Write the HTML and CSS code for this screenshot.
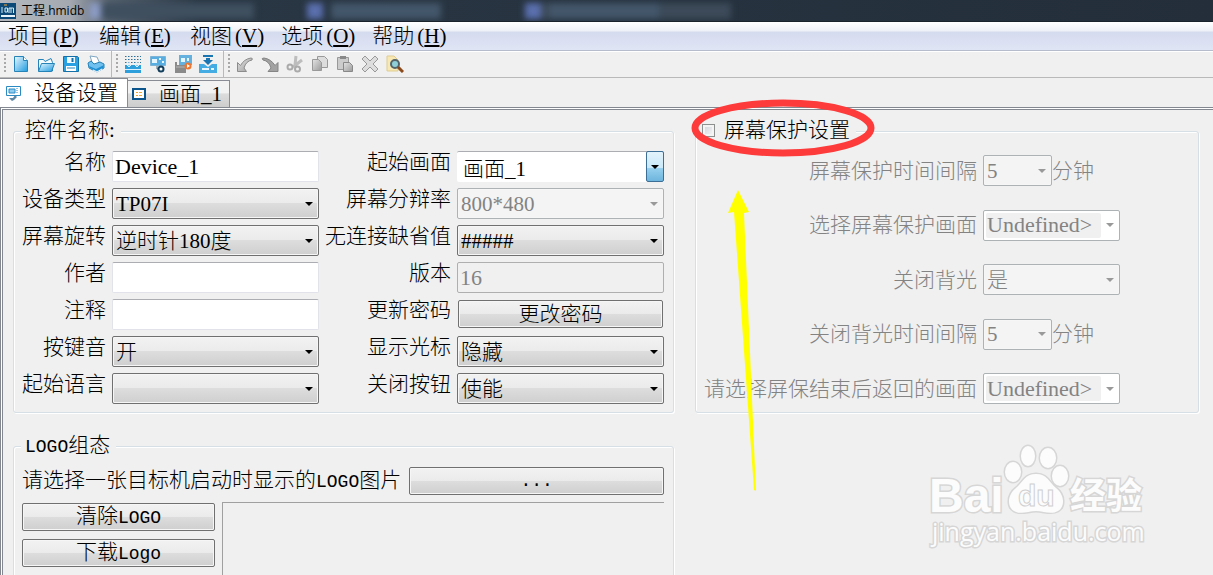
FILE: index.html
```html
<!DOCTYPE html>
<html lang="zh-CN">
<head>
    <meta charset="UTF-8">
    <meta name="viewport" content="width=device-width, initial-scale=1.0">
    <title>工程.hmidb</title>
    <link rel="stylesheet" href="styles.css">
</head>
<body>

<!-- Title bar -->
<header class="titlebar">
    <svg class="app-icon" width="16" height="16" viewBox="0 0 16 16">
        <rect width="16" height="16" fill="#0b4a78"/>
        <rect x="1" y="12" width="14" height="2" fill="#e8f4fb"/>
        <path d="M2 4v6M5 5h2.500v4H5zM9 10V5h2v5M11 5h2.500v5" fill="none" stroke="#d5ecf8"/>
        <path d="M4 2h3" stroke="#f0a030"/>
    </svg>
    <span class="title">工程.hmidb</span>
    <div class="glass">
        <span class="glass-tab tab-a"></span>
        <span class="glass-tab tab-b"></span>
        <span class="glass-tab tab-c"></span>
    </div>
</header>

<!-- Menu -->
<nav class="menubar">
    <button type="button">项目<span class="latin">(<u>P</u>)</span></button>
    <button type="button">编辑<span class="latin">(<u>E</u>)</span></button>
    <button type="button">视图<span class="latin">(<u>V</u>)</span></button>
    <button type="button">选项<span class="latin">(<u>O</u>)</span></button>
    <button type="button">帮助<span class="latin">(<u>H</u>)</span></button>
</nav>

<svg class="defs" width="0" height="0">
    <defs>
        <linearGradient id="blue" x1="0" y1="0" x2="1" y2="1">
            <stop offset="0" stop-color="#eaf8ff"/>
            <stop offset="1" stop-color="#1e9be0"/>
        </linearGradient>
        <linearGradient id="gray" x1="0" y1="0" x2="1" y2="1">
            <stop offset="0" stop-color="#e4e4e4"/>
            <stop offset="1" stop-color="#9a9a9a"/>
        </linearGradient>
    </defs>
</svg>

<!-- Toolbar -->
<div class="toolbar">
    <div class="tool-group">
        <button type="button" aria-label="新建">
            <svg width="18" height="18" viewBox="0 0 18 18"><path d="M2.500 1.500h9l4 4v11h-13z" fill="url(#blue)" stroke="#2583b8"/><path d="M11.500 1.500v4h4" fill="#fff" stroke="#2583b8"/></svg>
        </button>
        <button type="button" aria-label="打开">
            <svg width="18" height="18" viewBox="0 0 18 18"><path d="M1.500 16V4.500h5l1.500 2 6-3 1.500 4V16z" fill="#f3fbff" stroke="#2583b8"/><path d="M1.500 16.500l3-8h13l-3 8z" fill="url(#blue)" stroke="#2583b8"/></svg>
        </button>
        <button type="button" aria-label="保存">
            <svg width="18" height="18" viewBox="0 0 18 18"><path d="M1.500 1.500h14l1 1v14h-15z" fill="#29a0e2" stroke="#1670a8"/><path d="M5 2h8v6H5z" fill="#eefaff"/><path d="M9.500 3h2v4h-2z" fill="#1670a8"/><path d="M4 11h10v5H4z" fill="#fff"/><path d="M5 13h8" stroke="#2583b8"/></svg>
        </button>
        <button type="button" aria-label="打印">
            <svg width="18" height="18" viewBox="0 0 18 18"><path d="M3 1l7 1 3 7-7 1z" fill="#fff" stroke="#7fa8c4"/><path d="M1 8l3-2 3 3 6-2 4 2v4l-7 4-8-4z" fill="#6fc0ee" stroke="#2583b8"/><path d="M2 11l7 3 8-4-1 3-6 3-7-3z" fill="#1e8fd2"/><path d="M6 15l4 2 5-3" fill="none" stroke="#fff"/></svg>
        </button>
    </div>
    <div class="tool-group">
        <button type="button" aria-label="编译">
            <svg width="18" height="18" viewBox="0 0 18 18"><path d="M1 1.500h16M1 4.500h16M1 7.500h16" stroke="#2d6f9c" stroke-dasharray="1.500 1.500"/><path d="M1 10h16v8H1z" fill="#2f9fdc"/><path d="M5 7v5M3 10l2 2 2-2M13 7v5M11 10l2 2 2-2M1 14.500h16" fill="none" stroke="#d9f1ff"/></svg>
        </button>
        <button type="button" aria-label="在线模拟">
            <svg width="18" height="18" viewBox="0 0 18 18"><path d="M1.500 1.500h15v9h-15z" fill="#58aee0" stroke="#7db4d6"/><path d="M3 4h5v4H3zM10 3h2v2h-2zM13 6h2v2h-2z" fill="#e6f6ff"/><path d="M8 11v3h2" fill="none" stroke="#5a6d7a"/><circle cx="12" cy="14" r="2.500" fill="#fff" stroke="#123e5b" stroke-width="2"/></svg>
        </button>
        <button type="button" aria-label="离线模拟">
            <svg width="18" height="18" viewBox="0 0 18 18"><path d="M5 0h13v10H5z" fill="#64b1df"/><path d="M7 3h4v4H7zM13 3h2v3h-2z" fill="#e6f6ff"/><path d="M1 7h2v3h9v8H1z" fill="#8a8a8a"/><path d="M2 12h9" stroke="#b5b5b5"/><circle cx="14" cy="11" r="3.500" fill="#ee7630"/><path d="M13 9l3 2-3 2z" fill="#fff"/></svg>
        </button>
        <button type="button" aria-label="下载">
            <svg width="18" height="18" viewBox="0 0 18 18"><path d="M4 0h10v2H4zM7 3h4v2h3L9 10 4 5h3z" fill="#1b75b0"/><path d="M0 9h5l4 3 4-3h5v9H0z" fill="#45abe3"/><path d="M3 14h7M12 14h3" stroke="#e8f7ff" stroke-width="2"/></svg>
        </button>
    </div>
    <div class="tool-group">
        <button type="button" aria-label="撤销">
            <svg width="18" height="18" viewBox="0 0 18 18"><path d="M1.500 16.500v-9l3 3Q8 4 15 3q2 0 1 2-6 1-8 8l2.500 3.500z" fill="url(#gray)" stroke="#8c8c8c"/></svg>
        </button>
        <button type="button" aria-label="重做">
            <svg width="18" height="18" viewBox="0 0 18 18"><path d="M17 16.500v-9l-3 3Q10 4 3 3 0 3 2 5q6 1 8 8l-3 3.500z" fill="#a2a2a2" stroke="#858585"/></svg>
        </button>
        <button type="button" aria-label="剪切">
            <svg width="18" height="18" viewBox="0 0 18 18"><path d="M10 1l-1 9M16 5l-9 7" stroke="#bdbdbd" stroke-width="3"/><circle cx="4" cy="12" r="2.500" fill="none" stroke="#aaa" stroke-width="2"/><circle cx="11.500" cy="14" r="2.500" fill="none" stroke="#aaa" stroke-width="2"/></svg>
        </button>
        <button type="button" aria-label="复制">
            <svg width="18" height="18" viewBox="0 0 18 18"><path d="M6.500 1.500h7l3 3v8h-10z" fill="#ddd" stroke="#999"/><path d="M1.500 4.500h6l3 3v8h-9z" fill="url(#gray)" stroke="#999"/></svg>
        </button>
        <button type="button" aria-label="粘贴">
            <svg width="18" height="18" viewBox="0 0 18 18"><path d="M1.500 2.500h11v12h-11z" fill="#ccc" stroke="#999"/><path d="M4 1h6v3H4z" fill="#888"/><path d="M7.500 7.500h6l3 3v6h-9z" fill="url(#gray)" stroke="#888"/></svg>
        </button>
        <button type="button" aria-label="删除">
            <svg width="18" height="18" viewBox="0 0 18 18"><path d="M4 1l5 5 5-5 3 3-5 5 5 5-3 3-5-5-5 5-3-3 5-5-5-5z" fill="#ddd" stroke="#999"/></svg>
        </button>
        <button type="button" aria-label="查找">
            <svg width="18" height="18" viewBox="0 0 18 18"><path d="M1 1h7l4 4v11H1z" fill="#f8e8b4" stroke="#dfcb90"/><circle cx="9" cy="9" r="4" fill="#8fd0d8" stroke="#54646c" stroke-width="2"/><path d="M12 12l5 5" stroke="#8a4a1c" stroke-width="3"/></svg>
        </button>
    </div>
</div>

<!-- Tabs -->
<div class="tabs" role="tablist">
    <button type="button" role="tab" class="tab active" aria-selected="true">
        <svg width="17" height="17" viewBox="0 0 17 17"><path d="M1.500 1.500h14v9h-14z" fill="#fff" stroke="#2a8ac4"/><path d="M4 4h6v4H4z" fill="#8fcdf0" stroke="#2a8ac4"/><path d="M12 3v5" stroke="#2a8ac4" stroke-dasharray="1 1"/><path d="M4 13h4l2-3 2 2-3 3-2 1z" fill="#5d87a5"/></svg>
        <span>设备设置</span>
    </button>
    <button type="button" role="tab" class="tab" aria-selected="false">
        <svg width="14" height="12" viewBox="0 0 14 12"><path d="M1 1h12v10H1z" fill="#fff" stroke="#0b548c" stroke-width="2"/><path d="M4 4h2v1H4zM7 4h3v1H7zM4 7h2v1H4zM7 7h3v1H7z" fill="#efa62c"/></svg>
        <span>画面<span class="latin">_1</span></span>
    </button>
</div>

<main class="pane">
    <fieldset class="group device">
        <legend>控件名称<span class="latin">:</span></legend>
        <div class="device-grid">
            <label for="name">名称</label>
            <input type="text" id="name" value="Device_1">
            <label for="startScreen">起始画面</label>
            <div class="combo hot">
                <input type="text" id="startScreen" value="画面_1">
                <button type="button" aria-label="展开"></button>
            </div>

            <label for="deviceType">设备类型</label>
            <select id="deviceType"><option>TP07I</option></select>
            <label for="resolution">屏幕分辩率</label>
            <select id="resolution" disabled><option>800*480</option></select>

            <label for="rotate">屏幕旋转</label>
            <select id="rotate"><option>逆时针180度</option></select>
            <label for="offline">无连接缺省值</label>
            <select id="offline"><option>#####</option></select>

            <label for="author">作者</label>
            <input type="text" id="author">
            <label for="version">版本</label>
            <input type="text" id="version" value="16" disabled>

            <label for="comment">注释</label>
            <input type="text" id="comment">
            <label for="password">更新密码</label>
            <button type="button" id="password" class="push">更改密码</button>

            <label for="keySound">按键音</label>
            <select id="keySound"><option>开</option></select>
            <label for="cursor">显示光标</label>
            <select id="cursor"><option>隐藏</option></select>

            <label for="language">起始语言</label>
            <select id="language"><option></option></select>
            <label for="closeButton">关闭按钮</label>
            <select id="closeButton"><option>使能</option></select>
        </div>
    </fieldset>

    <fieldset class="group saver" disabled>
        <legend><label class="saver-title"><input type="checkbox" id="saverOn">屏幕保护设置</label></legend>
        <div class="saver-grid">
            <label for="saverTime">屏幕保护时间间隔</label>
            <div class="field"><select id="saverTime" class="short"><option>5</option></select><span>分钟</span></div>

            <label for="saverScreen">选择屏幕保护画面</label>
            <div class="combo">
                <input type="text" id="saverScreen" value="Undefined&gt;">
                <button type="button" aria-label="展开"></button>
            </div>

            <label for="backlight">关闭背光</label>
            <div class="field"><select id="backlight"><option>是</option></select></div>

            <label for="backlightTime">关闭背光时间间隔</label>
            <div class="field"><select id="backlightTime" class="short"><option>5</option></select><span>分钟</span></div>

            <label for="returnScreen">请选择屏保结束后返回的画面</label>
            <div class="combo">
                <input type="text" id="returnScreen" value="Undefined&gt;">
                <button type="button" aria-label="展开"></button>
            </div>
        </div>
    </fieldset>

    <fieldset class="group logo">
        <legend><span class="mono">LOGO</span>组态</legend>
        <div class="logo-pick">
            <label for="browse">请选择一张目标机启动时显示的<span class="mono">LOGO</span>图片</label>
            <button type="button" id="browse" class="push mono">...</button>
        </div>
        <div class="logo-body">
            <div class="logo-actions">
                <button type="button" class="push">清除<span class="mono">LOGO</span></button>
                <button type="button" class="push">下载<span class="mono">Logo</span></button>
                <input type="text" class="logo-size" aria-label="LOGO" disabled>
            </div>
            <div class="preview"></div>
        </div>
    </fieldset>
</main>

<!-- Marks drawn over the window -->
<svg class="marks" width="200" height="400" viewBox="0 0 200 400">
    <ellipse cx="98" cy="33" rx="88" ry="25" fill="none" stroke="#fc3b3a" stroke-width="7"/>
    <path d="M53 95l11 22-5 1 12 278-2-1-20-278-6 1z" fill="#ffff00"/>
</svg>

<svg class="watermark" width="224" height="110" viewBox="0 0 224 110">
    <g fill="#fcfcfc" stroke="#d6d6d6" stroke-width="3" paint-order="stroke">
        <text class="wm-latin" x="1" y="72">Bai</text>
        <ellipse cx="85" cy="32" rx="8" ry="10"/>
        <ellipse cx="100" cy="16" rx="7" ry="10"/>
        <ellipse cx="120" cy="18" rx="8" ry="10"/>
        <ellipse cx="132" cy="36" rx="8" ry="10"/>
        <path d="M108 34C97 34 95 42 88 48C79 55 79 67 86 71C93 75 100 71 108 71C116 71 123 75 130 71C137 67 137 55 128 48C121 42 119 34 108 34Z"/>
        <text class="wm-cjk" x="142" y="69">经验</text>
        <text class="wm-url" x="4" y="101">jingyan.baidu.com</text>
    </g>
    <text class="wm-du" x="90" y="66">du</text>
</svg>

</body>
</html>
```
FILE: styles.css
```css
* {
    box-sizing: border-box;
}

body {
    margin: 0;
    height: 100vh;
    overflow: hidden;
    display: flex;
    flex-direction: column;
    position: relative;
    background-color: #f0f0f0;
    color: #000;
    font-family: "Liberation Serif", "Noto Sans CJK SC", serif;
    font-weight: 300;
    font-size: 21px;
    line-height: 22px;
}

button, input, select {
    font: inherit;
    color: inherit;
    margin: 0;
    border-radius: 2px;
}

.mono {
    font-family: "Liberation Mono", "Noto Sans CJK SC", monospace;
    font-size: 18px;
}

.defs {
    position: absolute;
}

/* Title bar */
.titlebar {
    flex: none;
    display: flex;
    align-items: center;
    gap: 5px;
    height: 22px;
    border-bottom: 1px solid #1a222c;
    background: linear-gradient(90deg, #b4b8be 0, #a4a9b1 70px, #55606d 110px, #293643 200px, #232e3a 100%);
    font-family: "Open Sans", "Noto Sans CJK SC", sans-serif;
    font-size: 12px;
    font-weight: 400;
    overflow: hidden;
}

.glass {
    display: flex;
    gap: 12px;
    filter: blur(3px);
}

.glass-tab {
    width: 206px;
    height: 16px;
    background: linear-gradient(90deg, #5a6fae 0 16px, transparent 16px 24px, #43566a 24px 65%, transparent 65%);
}

.tab-a {
    background: linear-gradient(90deg, #8c9cc4 0 12px, #3f4f5f 12px 80%, transparent 80%);
}

.tab-c {
    background-color: #3c4a59;
}

/* Menu */
.menubar {
    flex: none;
    display: flex;
    gap: 17px;
    height: 29px;
    padding: 0 8px;
    border-bottom: 1px solid #b6bccc;
    box-shadow: 0 1px 0 #fff;
    background: linear-gradient(#fff 0, #eef1f8 9px, #d5dbee 10px, #e0e5f5 100%);
}

.menubar button {
    min-width: 74px;
    padding: 0;
    border: none;
    background: none;
    text-align: left;
    white-space: nowrap;
}

.menubar .latin {
    padding-left: 3px;
}

.menubar u {
    text-underline-offset: 2px;
}

/* Toolbar */
.toolbar {
    flex: none;
    display: flex;
    height: 27px;
    border-bottom: 1px solid #b9b9b9;
}

.tool-group {
    display: flex;
    align-items: center;
    padding: 0 3px 0 4px;
    border-right: 1px solid #b9b9b9;
}

.tool-group:last-child {
    border-right: none;
}

.tool-group::before {
    content: "";
    width: 2px;
    height: 20px;
    margin-right: 2px;
    background: repeating-linear-gradient(#a8a8a8 0 2px, transparent 2px 4px);
}

.tool-group button {
    display: flex;
    justify-content: center;
    width: 25px;
    padding: 0;
    border: none;
    background: none;
}

/* Tabs */
.tabs {
    flex: none;
    display: flex;
    align-items: flex-end;
    height: 29px;
}

.tab {
    display: flex;
    align-items: center;
    gap: 13px;
    height: 27px;
    padding: 0 7px 0 4px;
    border: 1px solid #898c95;
    border-width: 1px 1px 0 0;
    border-radius: 0;
    background: linear-gradient(#f2f2f2 0 45%, #dcdcdc 50%, #cdcdcd 100%);
}

.tab.active {
    height: 29px;
    padding: 0 9px 0 5px;
    gap: 12px;
    background: #fff;
}

/* Pane with the groups */
.pane {
    flex: 1;
    min-height: 0;
    display: grid;
    grid-template-columns: 661fr 504fr;
    grid-template-rows: auto auto;
    align-content: start;
    gap: 22px 21px;
    padding: 12px 14px 0 12px;
    border-top: 1px solid #828790;
    border-left: 1px solid #828790;
    box-shadow: inset 1px 1px 0 #fff, inset 2px 2px 0 #828790;
}

.group {
    min-width: 0;
    margin: 0;
    padding: 9px 9px 8px 8px;
    border: 1px solid #d5dfe5;
    border-radius: 3px;
    box-shadow: inset 1px 1px 0 #fff, 1px 1px 0 #fff;
}

legend {
    margin-left: -1px;
    padding: 0 6px 0 4px;
    height: 22px;
    background-color: #f0f0f0;
    line-height: 20px;
    white-space: nowrap;
}

.device-grid {
    display: grid;
    grid-template-columns: auto 1fr auto 1fr;
    grid-auto-rows: 31px;
    gap: 6px;
}

.device-grid label {
    text-align: right;
    white-space: nowrap;
}

/* Controls */
input[type="text"] {
    width: 100%;
    min-width: 0;
    height: 31px;
    padding: 0 2px;
    border: 1px solid #e2e3ea;
    border-top-color: #abadb3;
    background-color: #fff;
    font-size: 22px;
}

input[type="text"]:disabled {
    border-color: #afafaf;
    background-color: #f0f0f0;
    color: #838383;
}

select {
    appearance: none;
    width: 100%;
    height: 31px;
    padding: 0 20px 0 3px;
    border: 1px solid #707070;
    background: url("data:image/svg+xml,%3Csvg xmlns='http://www.w3.org/2000/svg' width='8' height='4'%3E%3Cpath d='M0 0h8L4 4z'/%3E%3C/svg%3E") no-repeat right 5px center, linear-gradient(#f2f2f2 0, #ebebeb 48%, #dddddd 50%, #cfcfcf 100%);
    box-shadow: inset 0 0 0 1px #f6f6f6;
}

select:disabled {
    border-color: #adb2b5;
    background: url("data:image/svg+xml,%3Csvg xmlns='http://www.w3.org/2000/svg' width='8' height='4'%3E%3Cpath d='M0 0h8L4 4z' fill='%23999'/%3E%3C/svg%3E") no-repeat right 5px center, #f4f4f4;
    color: #838383;
    opacity: 1;
}

.push {
    height: 28px;
    padding: 0 8px;
    border: 1px solid #707070;
    background: linear-gradient(#f2f2f2 0, #ebebeb 48%, #dddddd 50%, #cfcfcf 100%);
    box-shadow: inset 0 0 0 1px #f6f6f6;
    line-height: 24px;
}

.device-grid .push {
    margin: 1px;
}

.combo {
    display: flex;
    height: 31px;
    border: 1px solid #adb2b5;
    border-radius: 2px;
    background-color: #fff;
}

.combo input[type="text"] {
    flex: 1;
    height: 25px;
    margin: 2px 0 2px 2px;
    padding: 0 1px;
    border: none;
}

.combo button {
    width: 18px;
    padding: 0;
    border: none;
    background: url("data:image/svg+xml,%3Csvg xmlns='http://www.w3.org/2000/svg' width='8' height='4'%3E%3Cpath d='M0 0h8L4 4z' fill='%23999'/%3E%3C/svg%3E") no-repeat center;
}

.combo.hot {
    border: none;
    border-top: 1px solid #abadb3;
}

.combo.hot input[type="text"] {
    padding-left: 4px;
    font-size: 21px;
}

.combo.hot button {
    height: 31px;
    margin-top: -1px;
    border: 1px solid #3c6e96;
    background: url("data:image/svg+xml,%3Csvg xmlns='http://www.w3.org/2000/svg' width='8' height='4'%3E%3Cpath d='M0 0h8L4 4z'/%3E%3C/svg%3E") no-repeat center, linear-gradient(#e2f3fc 0, #c9e8f8 55%, #95cfee 57%, #6db5dd 100%);
}

/* Screen saver */
.saver {
    display: flex;
    flex-direction: column;
    color: #838383;
}

.saver legend {
    margin-left: -4px;
    padding-left: 2px;
}

.saver-title {
    display: flex;
    align-items: center;
    gap: 9px;
    color: #000;
}

.saver-title input {
    appearance: none;
    width: 13px;
    height: 13px;
    border: 1px solid #8e8f8f;
    border-radius: 0;
    background: linear-gradient(135deg, #cfd3d8, #f8f8f8);
    box-shadow: inset 0 0 0 2px #f4f4f4;
}

.saver-grid {
    flex: 1;
    display: grid;
    grid-template-columns: auto 137px;
    justify-content: start;
    align-content: space-between;
    align-items: center;
    column-gap: 6px;
    padding-top: 4px;
}

.saver-grid label {
    text-align: right;
    white-space: nowrap;
}

.field {
    display: flex;
    align-items: center;
    white-space: nowrap;
}

.field .short {
    width: 69px;
}

/* Logo */
.logo {
    padding-top: 10px;
}

.logo-pick {
    display: flex;
    align-items: center;
    gap: 8px;
    white-space: nowrap;
}

.logo-pick .push {
    flex: 1;
}

.logo-body {
    display: grid;
    grid-template-columns: 193px 1fr;
    gap: 7px;
    margin-top: 7px;
}

.logo-actions {
    display: flex;
    flex-direction: column;
    gap: 8px;
    padding-top: 1px;
}

input.logo-size {
    align-self: flex-end;
    width: 102px;
}

.preview {
    border: 1px solid #a0a0a0;
    border-width: 1px 0 0 1px;
}

/* Marks over the window */
.marks {
    position: absolute;
    left: 685px;
    top: 95px;
    pointer-events: none;
}

.watermark {
    position: absolute;
    right: 61px;
    top: 440px;
    pointer-events: none;
}

.wm-latin {
    font: bold 48px "Liberation Sans", sans-serif;
}

.wm-cjk {
    font: bold 36px "Noto Sans CJK SC", sans-serif;
}

.wm-url {
    font: 25px "Open Sans", sans-serif;
}

.wm-du {
    font: bold 30px "Liberation Sans", sans-serif;
    fill: #fcfcfc;
    stroke: #d0d0d0;
}
```
